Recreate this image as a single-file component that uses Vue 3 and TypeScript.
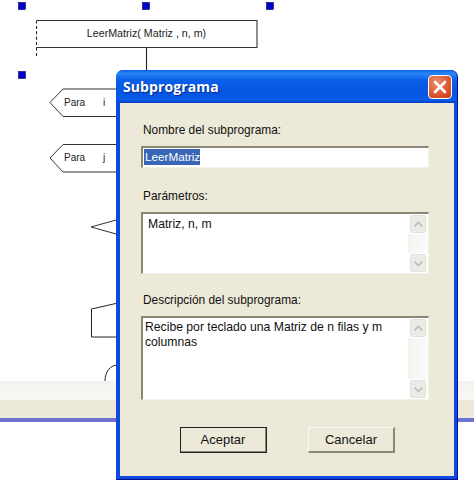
<script setup lang="ts">
const handles: [number, number][] = [[22, 6], [146, 6], [270, 6], [22, 75]]
</script>

<template>
  <div class="page">
    <svg class="diagram" width="474" height="381" viewBox="0 0 474 381">
      <rect v-for="h in handles" :key="h[0] + '-' + h[1]" :x="h[0] - 3.5" :y="h[1] - 3.5" width="7" height="7" fill="#0000c8" stroke="#000070" stroke-width="0.6" />
      <path d="M36.5 20.5H257V47.5H36.5" fill="none" stroke="#333" stroke-width="1.1" />
      <path d="M36.5 20.5V57" fill="none" stroke="#222" stroke-width="1.1" stroke-dasharray="3 2.4" />
      <path d="M146.5 47.5V71" fill="none" stroke="#222" stroke-width="1.1" />
      <text x="146.5" y="37" text-anchor="middle" class="dt wide">LeerMatriz( Matriz , n, m)</text>
      <path d="M118 89H63L50 102.500L63 116.500H118" fill="none" stroke="#333" stroke-width="1" />
      <text x="64" y="106" class="dt">Para</text>
      <text x="103" y="106" class="dt">i</text>
      <path d="M118 144.500H63L50 158L63 172H118" fill="none" stroke="#333" stroke-width="1" />
      <text x="64" y="161" class="dt">Para</text>
      <text x="103" y="161" class="dt">j</text>
      <path d="M118 219.500L91 227L118 234.500" fill="none" stroke="#333" stroke-width="1" />
      <path d="M118 303L91.500 309V337H118" fill="none" stroke="#222" stroke-width="1" />
      <path d="M105 381C105 372 110 365 118 365" fill="none" stroke="#222" stroke-width="1" />
    </svg>

    <div class="footer">
      <div class="fade"></div>
      <div class="beige"></div>
      <div class="blue"></div>
    </div>

    <section class="dialog">
      <header class="titlebar">
        <span class="title">Subprograma</span>
        <span class="close">
          <svg width="14" height="14" viewBox="0 0 14 14"><path d="M2 2L12 12M12 2L2 12" stroke="#fff" stroke-width="2.6" stroke-linecap="round" /></svg>
        </span>
      </header>
      <div class="client">
        <label class="lbl first">Nombre del subprograma:</label>
        <div class="field single"><span class="sel">LeerMatriz</span></div>

        <label class="lbl second">Parámetros:</label>
        <div class="field area short">
          <div class="txt pad">Matriz, n, m</div>
          <div class="scroll">
            <span class="sbtn"><svg width="11" height="7" viewBox="0 0 11 7"><path d="M1.500 5.500L5.500 1.500L9.500 5.500" fill="none" stroke="#b4bdb6" stroke-width="1.600" /></svg></span>
            <span class="strack"></span>
            <span class="sbtn"><svg width="11" height="7" viewBox="0 0 11 7"><path d="M1.500 1.500L5.500 5.500L9.500 1.500" fill="none" stroke="#b4bdb6" stroke-width="1.600" /></svg></span>
          </div>
        </div>

        <label class="lbl third">Descripción del subprograma:</label>
        <div class="field area tall">
          <div class="txt">Recibe por teclado una Matriz de n filas y m columnas</div>
          <div class="scroll">
            <span class="sbtn"><svg width="11" height="7" viewBox="0 0 11 7"><path d="M1.500 5.500L5.500 1.500L9.500 5.500" fill="none" stroke="#b4bdb6" stroke-width="1.600" /></svg></span>
            <span class="strack"></span>
            <span class="sbtn"><svg width="11" height="7" viewBox="0 0 11 7"><path d="M1.500 1.500L5.500 5.500L9.500 1.500" fill="none" stroke="#b4bdb6" stroke-width="1.600" /></svg></span>
          </div>
        </div>

        <div class="actions">
          <button class="btn default">Aceptar</button>
          <button class="btn">Cancelar</button>
        </div>
      </div>
    </section>
  </div>
</template>

<style>
html, body { margin: 0; background: #fff; }
</style>

<style scoped>
.page {
  position: relative;
  width: 474px;
  height: 492px;
  background: #fff;
  overflow: hidden;
  font-family: "Liberation Sans", Arial, sans-serif;
}
.diagram { display: block; }
.dt { font: 10px "Liberation Sans", Arial, sans-serif; fill: #222; }
.wide { font-size: 10.700px; }
.footer { width: 474px; }
.fade { height: 19px; background: linear-gradient(#f2f2ee, #f7f7f4); }
.beige { height: 18px; background: #ece9d8; }
.blue { height: 4px; background: #6f73cf; }

.dialog {
  position: absolute;
  left: 116px;
  top: 70px;
  width: 342px;
  height: 410px;
  box-sizing: border-box;
  display: flex;
  flex-direction: column;
  border-radius: 7px 7px 0 0;
  background: #0f49e0;
  border-bottom: 1px solid #00138c;
  border-right: 1px solid #00138c;
}
.titlebar {
  height: 33px;
  flex: none;
  display: flex;
  align-items: center;
  justify-content: space-between;
  padding: 0 5px 0 7px;
  border-radius: 7px 7px 0 0;
  background: linear-gradient(#0a5be8 0%, #2a86f5 10%, #0b5fe8 30%, #0455e2 70%, #0a5ce8 90%, #0340c8 100%);
}
.title {
  font: bold 14px "Open Sans", "DejaVu Sans", sans-serif;
  color: #fff;
  text-shadow: 1px 1px 1px #0a2a90;
  letter-spacing: 0.1px;
}
.close {
  width: 22px;
  height: 22px;
  display: flex;
  align-items: center;
  justify-content: center;
  border: 1px solid #fff;
  border-radius: 4px;
  background: radial-gradient(circle at 35% 30%, #ee8f6c, #d9512a 65%, #c23c18);
}
.client {
  flex: 1;
  margin: 0 3px 3px 4px;
  background: #ece9d8;
  display: flex;
  flex-direction: column;
  padding: 0 25px 0 21px;
  font-size: 11.900px;
  color: #111;
}
.lbl { display: block; line-height: 14px; padding-left: 2px; }
.first { margin-top: 20px; }
.second { margin-top: 21px; }
.third { margin-top: 19px; }
.field {
  box-sizing: border-box;
  background: #fff;
  border-style: solid;
  border-width: 2px 1px 1px 2px;
  border-color: #8a8778 #f4f2e8 #f4f2e8 #8a8778;
  width: 288px;
}
.single { height: 22px; margin-top: 9px; padding: 1px 0 0 1px; }
.sel { display: inline-block; background: #3a66b8; color: #fff; line-height: 16px; padding: 0 0 0 1px; font-size: 11.700px; }
.area { display: flex; justify-content: space-between; margin-top: 9px; }
.short { height: 62px; }
.tall { height: 84px; }
.txt { width: 265px; padding: 2px 0 0 2px; line-height: 15px; font-size: 12.200px; box-sizing: border-box; }
.pad { padding: 3px 0 0 5px; }
.scroll { width: 20px; display: flex; flex-direction: column; background: #fff; }
.sbtn {
  height: 16px;
  flex: none;
  margin: 1px 2px;
  display: flex;
  align-items: center;
  justify-content: center;
  background: #ecebe6;
  border: 1px solid #e2e2dc;
  border-radius: 2px;
}
.strack { flex: 1; background: linear-gradient(90deg, #f3f3ee, #fbfbf9); }
.actions {
  display: flex;
  gap: 41px;
  margin-top: 27px;
  padding-left: 39px;
}
.btn {
  width: 87px;
  height: 26px;
  padding: 0;
  box-sizing: border-box;
  font: 13px "Liberation Sans", Arial, sans-serif;
  color: #111;
  background: #ece9d8;
  border-style: solid;
  border-width: 1px 2px 2px 1px;
  border-color: #fbfaf4 #8a8778 #8a8778 #fbfaf4;
}
.btn.default {
  outline: 1px solid #222;
  outline-offset: -1px;
}
</style>
